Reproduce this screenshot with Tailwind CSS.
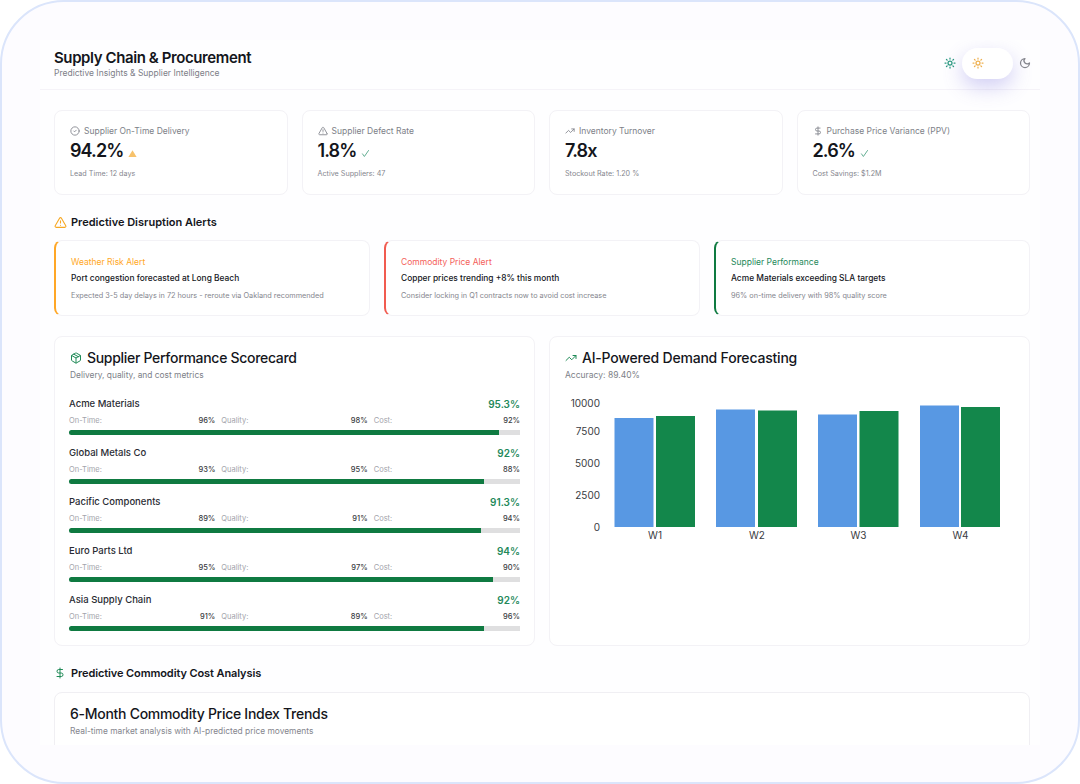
<!DOCTYPE html>
<html lang="en">
<head>
    <meta charset="UTF-8">
    <title>Supply Chain &amp; Procurement</title>
    <script src="https://cdn.jsdelivr.net/npm/@tailwindcss/browser@4"></script>
</head>
<body class="bg-white font-['Inter',sans-serif] text-[#14161c] w-[1080px] h-[784px] overflow-hidden">
    <div class="h-[784px] rounded-[64px] border-2 border-[#dbe5fb] bg-[#fdfcff] pt-[38px] px-[38px]">
        <main class="h-[705px] w-[1000px] overflow-hidden bg-[#fefeff]">
            <!-- Header -->
            <header class="h-[50px] border-b border-[#f5f3f8] pl-[14px] pr-[9px] flex items-center justify-between">
                <div class="pb-[2px]">
                    <h1 class="text-[15px] leading-[18px] font-semibold tracking-[-0.4px]">Supply Chain &amp; Procurement</h1>
                    <p class="text-[8.5px] leading-[12px] text-[#7d7f88]">Predictive Insights &amp; Supplier Intelligence</p>
                </div>
                <div class="flex items-center gap-[6px] mt-[-3px]">
                    <svg class="w-[12px] h-[12px] text-[#2a9a80]" viewBox="0 0 24 24" fill="none" stroke="currentColor" stroke-width="2.5" stroke-linecap="round"><circle cx="12" cy="12" r="4"/><path d="M12 2v2"/><path d="M12 20v2"/><path d="m4.93 4.93 1.41 1.41"/><path d="m17.66 17.66 1.41 1.41"/><path d="M2 12h2"/><path d="M20 12h2"/><path d="m6.34 17.66-1.41 1.41"/><path d="m19.07 4.93-1.41 1.41"/></svg>
                    <div class="w-[51px] h-[31px] rounded-full bg-white shadow-[0_8px_20px_rgba(110,100,220,0.3)] flex items-center pl-[10px]">
                        <svg class="w-[12px] h-[12px] text-[#eeb04f]" viewBox="0 0 24 24" fill="none" stroke="currentColor" stroke-width="2.5" stroke-linecap="round"><circle cx="12" cy="12" r="4"/><path d="M12 2v2"/><path d="M12 20v2"/><path d="m4.93 4.93 1.41 1.41"/><path d="m17.66 17.66 1.41 1.41"/><path d="M2 12h2"/><path d="M20 12h2"/><path d="m6.34 17.66-1.41 1.41"/><path d="m19.07 4.93-1.41 1.41"/></svg>
                    </div>
                    <svg class="w-[12px] h-[12px] text-[#85868e]" viewBox="0 0 24 24" fill="none" stroke="currentColor" stroke-width="2.5" stroke-linecap="round" stroke-linejoin="round"><path d="M12 3a6 6 0 0 0 9 9 9 9 0 1 1-9-9Z"/></svg>
                </div>
            </header>

            <div class="pl-[14px] pr-[10px] pt-[20px]">
                <!-- KPI cards -->
                <section class="grid grid-cols-4 gap-[14px]">
                    <div class="h-[85px] rounded-[8px] bg-white border border-[#f3f2f6] px-[15px] pt-[14px]">
                        <div class="flex items-center gap-[4px] text-[8.5px] leading-[12px] text-[#7d7f88]">
                            <svg class="w-[10px] h-[10px]" viewBox="0 0 24 24" fill="none" stroke="currentColor" stroke-width="2" stroke-linecap="round" stroke-linejoin="round"><circle cx="12" cy="12" r="10"/><path d="m9 12 2 2 4-4"/></svg>
                            Supplier On-Time Delivery
                        </div>
                        <div class="flex items-center gap-[5px] mt-[1px]">
                            <span class="text-[18px] leading-[26px] font-semibold tracking-[-0.9px]">94.2%</span>
                            <svg class="w-[9px] h-[9px] mt-[4px] text-[#f7c26b]" viewBox="0 0 24 24" fill="currentColor"><path d="M12 3 23 21H1Z"/></svg>
                        </div>
                        <p class="mt-[5px] text-[7.2px] leading-[10px] text-[#85868e]">Lead Time: 12 days</p>
                    </div>
                    <div class="h-[85px] rounded-[8px] bg-white border border-[#f3f2f6] px-[15px] pt-[14px]">
                        <div class="flex items-center gap-[4px] text-[8.5px] leading-[12px] text-[#7d7f88]">
                            <svg class="w-[10px] h-[10px]" viewBox="0 0 24 24" fill="none" stroke="currentColor" stroke-width="2" stroke-linecap="round" stroke-linejoin="round"><path d="m21.73 18-8-14a2 2 0 0 0-3.48 0l-8 14A2 2 0 0 0 4 21h16a2 2 0 0 0 1.73-3"/><path d="M12 9v4"/><path d="M12 17h.01"/></svg>
                            Supplier Defect Rate
                        </div>
                        <div class="flex items-center gap-[5px] mt-[1px]">
                            <span class="text-[18px] leading-[26px] font-semibold tracking-[-0.9px]">1.8%</span>
                            <svg class="w-[9px] h-[9px] mt-[4px] text-[#5aa98c]" viewBox="0 0 24 24" fill="none" stroke="currentColor" stroke-width="2.5" stroke-linecap="round"><path d="m4 13 5 7L20 4"/></svg>
                        </div>
                        <p class="mt-[5px] text-[7.2px] leading-[10px] text-[#85868e]">Active Suppliers: 47</p>
                    </div>
                    <div class="h-[85px] rounded-[8px] bg-white border border-[#f3f2f6] px-[15px] pt-[14px]">
                        <div class="flex items-center gap-[4px] text-[8.5px] leading-[12px] text-[#7d7f88]">
                            <svg class="w-[10px] h-[10px]" viewBox="0 0 24 24" fill="none" stroke="currentColor" stroke-width="2" stroke-linecap="round" stroke-linejoin="round"><polyline points="22 7 13.5 15.5 8.5 10.5 2 17"/><polyline points="16 7 22 7 22 13"/></svg>
                            Inventory Turnover
                        </div>
                        <div class="flex items-center gap-[5px] mt-[1px]">
                            <span class="text-[18px] leading-[26px] font-semibold tracking-[-0.9px]">7.8x</span>
                        </div>
                        <p class="mt-[5px] text-[7.2px] leading-[10px] text-[#85868e]">Stockout Rate: 1.20 %</p>
                    </div>
                    <div class="h-[85px] rounded-[8px] bg-white border border-[#f3f2f6] px-[15px] pt-[14px]">
                        <div class="flex items-center gap-[4px] text-[8.5px] leading-[12px] text-[#7d7f88]">
                            <svg class="w-[10px] h-[10px]" viewBox="0 0 24 24" fill="none" stroke="currentColor" stroke-width="2" stroke-linecap="round" stroke-linejoin="round"><line x1="12" x2="12" y1="2" y2="22"/><path d="M17 5H9.5a3.5 3.5 0 0 0 0 7h5a3.5 3.5 0 0 1 0 7H6"/></svg>
                            Purchase Price Variance (PPV)
                        </div>
                        <div class="flex items-center gap-[5px] mt-[1px]">
                            <span class="text-[18px] leading-[26px] font-semibold tracking-[-0.9px]">2.6%</span>
                            <svg class="w-[9px] h-[9px] mt-[4px] text-[#5aa98c]" viewBox="0 0 24 24" fill="none" stroke="currentColor" stroke-width="2.5" stroke-linecap="round"><path d="m4 13 5 7L20 4"/></svg>
                        </div>
                        <p class="mt-[5px] text-[7.2px] leading-[10px] text-[#85868e]">Cost Savings: $1.2M</p>
                    </div>
                </section>

                <!-- Alerts -->
                <h2 class="mt-[20px] h-[14px] flex items-center gap-[4px] text-[11px] font-semibold">
                    <svg class="w-[13px] h-[13px] text-[#f7a823]" viewBox="0 0 24 24" fill="none" stroke="currentColor" stroke-width="2" stroke-linecap="round" stroke-linejoin="round"><path d="m21.73 18-8-14a2 2 0 0 0-3.48 0l-8 14A2 2 0 0 0 4 21h16a2 2 0 0 0 1.73-3"/><path d="M12 9v4"/><path d="M12 17h.01"/></svg>
                    Predictive Disruption Alerts
                </h2>
                <section class="grid grid-cols-3 gap-[14px] mt-[11px]">
                    <div class="h-[76px] rounded-[8px] bg-white border border-[#f3f2f6] border-l-2 border-l-[#ffa726] pl-[15px] pt-[15px]">
                        <p class="text-[8.5px] leading-[12px] text-[#ffa726]">Weather Risk Alert</p>
                        <p class="mt-[4px] text-[8.4px] leading-[12px] font-medium">Port congestion forecasted at Long Beach</p>
                        <p class="mt-[6px] text-[7.3px] leading-[12px] text-[#85868e]">Expected 3-5 day delays in 72 hours - reroute via Oakland recommended</p>
                    </div>
                    <div class="h-[76px] rounded-[8px] bg-white border border-[#f3f2f6] border-l-2 border-l-[#f15b50] pl-[15px] pt-[15px]">
                        <p class="text-[8.5px] leading-[12px] text-[#f4615a]">Commodity Price Alert</p>
                        <p class="mt-[4px] text-[8.4px] leading-[12px] font-medium">Copper prices trending +8% this month</p>
                        <p class="mt-[6px] text-[7.3px] leading-[12px] text-[#85868e]">Consider locking in Q1 contracts now to avoid cost increase</p>
                    </div>
                    <div class="h-[76px] rounded-[8px] bg-white border border-[#f3f2f6] border-l-2 border-l-[#0f7a41] pl-[15px] pt-[15px]">
                        <p class="text-[8.5px] leading-[12px] text-[#23895a]">Supplier Performance</p>
                        <p class="mt-[4px] text-[8.4px] leading-[12px] font-medium">Acme Materials exceeding SLA targets</p>
                        <p class="mt-[6px] text-[7.3px] leading-[12px] text-[#85868e]">96% on-time delivery with 98% quality score</p>
                    </div>
                </section>

                <!-- Scorecard + forecast -->
                <section class="grid grid-cols-2 gap-[14px] mt-[20px]">
                    <div class="h-[310px] rounded-[8px] bg-white border border-[#f3f2f6] px-[15px] pt-[12px]">
                        <h3 class="flex items-center gap-[5px] text-[14px] leading-[18px] font-medium tracking-[-0.3px]">
                            <svg class="w-[12px] h-[12px] text-[#1f8a57]" viewBox="0 0 24 24" fill="none" stroke="currentColor" stroke-width="2" stroke-linecap="round" stroke-linejoin="round"><path d="M11 21.73a2 2 0 0 0 2 0l7-4A2 2 0 0 0 21 16V8a2 2 0 0 0-1-1.73l-7-4a2 2 0 0 0-2 0l-7 4A2 2 0 0 0 3 8v8a2 2 0 0 0 1 1.73z"/><path d="M12 22V12"/><polyline points="3.29 7 12 12 20.71 7"/><path d="m7.5 4.27 9 5.15"/></svg>
                            Supplier Performance Scorecard
                        </h3>
                        <p class="mt-[2px] text-[8.4px] leading-[12px] text-[#7d7f88]">Delivery, quality, and cost metrics</p>

                        <div class="mt-[17px] mx-[-1px] flex flex-col gap-[9px]">
                            <div class="h-[40px]">
                                <div class="flex justify-between items-center text-[9.5px] leading-[12px]"><span class="font-medium text-[#2a2c33]">Acme Materials</span><span class="text-[10px] leading-[10px] font-semibold text-[#23895a]">95.3%</span></div>
                                <div class="grid grid-cols-3 gap-[6px] mt-[5.5px] text-[7.5px] leading-[10px]">
                                    <div class="flex justify-between"><span class="text-[#a3a4ab]">On-Time:</span><span class="font-medium text-[#3a3c42]">96%</span></div>
                                    <div class="flex justify-between"><span class="text-[#a3a4ab]">Quality:</span><span class="font-medium text-[#3a3c42]">98%</span></div>
                                    <div class="flex justify-between"><span class="text-[#a3a4ab]">Cost:</span><span class="font-medium text-[#3a3c42]">92%</span></div>
                                </div>
                                <div class="mt-[4px] h-[5px] rounded-l-full bg-[#dfdfe0]"><div class="h-full rounded-l-full bg-[#0f7a41]" style="width: 95.3%"></div></div>
                            </div>
                            <div class="h-[40px]">
                                <div class="flex justify-between items-center text-[9.5px] leading-[12px]"><span class="font-medium text-[#2a2c33]">Global Metals Co</span><span class="text-[10px] leading-[10px] font-semibold text-[#23895a]">92%</span></div>
                                <div class="grid grid-cols-3 gap-[6px] mt-[5.5px] text-[7.5px] leading-[10px]">
                                    <div class="flex justify-between"><span class="text-[#a3a4ab]">On-Time:</span><span class="font-medium text-[#3a3c42]">93%</span></div>
                                    <div class="flex justify-between"><span class="text-[#a3a4ab]">Quality:</span><span class="font-medium text-[#3a3c42]">95%</span></div>
                                    <div class="flex justify-between"><span class="text-[#a3a4ab]">Cost:</span><span class="font-medium text-[#3a3c42]">88%</span></div>
                                </div>
                                <div class="mt-[4px] h-[5px] rounded-l-full bg-[#dfdfe0]"><div class="h-full rounded-l-full bg-[#0f7a41]" style="width: 92%"></div></div>
                            </div>
                            <div class="h-[40px]">
                                <div class="flex justify-between items-center text-[9.5px] leading-[12px]"><span class="font-medium text-[#2a2c33]">Pacific Components</span><span class="text-[10px] leading-[10px] font-semibold text-[#23895a]">91.3%</span></div>
                                <div class="grid grid-cols-3 gap-[6px] mt-[5.5px] text-[7.5px] leading-[10px]">
                                    <div class="flex justify-between"><span class="text-[#a3a4ab]">On-Time:</span><span class="font-medium text-[#3a3c42]">89%</span></div>
                                    <div class="flex justify-between"><span class="text-[#a3a4ab]">Quality:</span><span class="font-medium text-[#3a3c42]">91%</span></div>
                                    <div class="flex justify-between"><span class="text-[#a3a4ab]">Cost:</span><span class="font-medium text-[#3a3c42]">94%</span></div>
                                </div>
                                <div class="mt-[4px] h-[5px] rounded-l-full bg-[#dfdfe0]"><div class="h-full rounded-l-full bg-[#0f7a41]" style="width: 91.3%"></div></div>
                            </div>
                            <div class="h-[40px]">
                                <div class="flex justify-between items-center text-[9.5px] leading-[12px]"><span class="font-medium text-[#2a2c33]">Euro Parts Ltd</span><span class="text-[10px] leading-[10px] font-semibold text-[#23895a]">94%</span></div>
                                <div class="grid grid-cols-3 gap-[6px] mt-[5.5px] text-[7.5px] leading-[10px]">
                                    <div class="flex justify-between"><span class="text-[#a3a4ab]">On-Time:</span><span class="font-medium text-[#3a3c42]">95%</span></div>
                                    <div class="flex justify-between"><span class="text-[#a3a4ab]">Quality:</span><span class="font-medium text-[#3a3c42]">97%</span></div>
                                    <div class="flex justify-between"><span class="text-[#a3a4ab]">Cost:</span><span class="font-medium text-[#3a3c42]">90%</span></div>
                                </div>
                                <div class="mt-[4px] h-[5px] rounded-l-full bg-[#dfdfe0]"><div class="h-full rounded-l-full bg-[#0f7a41]" style="width: 94%"></div></div>
                            </div>
                            <div class="h-[40px]">
                                <div class="flex justify-between items-center text-[9.5px] leading-[12px]"><span class="font-medium text-[#2a2c33]">Asia Supply Chain</span><span class="text-[10px] leading-[10px] font-semibold text-[#23895a]">92%</span></div>
                                <div class="grid grid-cols-3 gap-[6px] mt-[5.5px] text-[7.5px] leading-[10px]">
                                    <div class="flex justify-between"><span class="text-[#a3a4ab]">On-Time:</span><span class="font-medium text-[#3a3c42]">91%</span></div>
                                    <div class="flex justify-between"><span class="text-[#a3a4ab]">Quality:</span><span class="font-medium text-[#3a3c42]">89%</span></div>
                                    <div class="flex justify-between"><span class="text-[#a3a4ab]">Cost:</span><span class="font-medium text-[#3a3c42]">96%</span></div>
                                </div>
                                <div class="mt-[4px] h-[5px] rounded-l-full bg-[#dfdfe0]"><div class="h-full rounded-l-full bg-[#0f7a41]" style="width: 92%"></div></div>
                            </div>
                        </div>
                    </div>

                    <div class="h-[310px] rounded-[8px] bg-white border border-[#f3f2f6] px-[15px] pt-[12px]">
                        <h3 class="flex items-center gap-[5px] text-[14px] leading-[18px] font-medium tracking-[-0.2px]">
                            <svg class="w-[12px] h-[12px] text-[#1f8a57]" viewBox="0 0 24 24" fill="none" stroke="currentColor" stroke-width="2" stroke-linecap="round" stroke-linejoin="round"><polyline points="22 7 13.5 15.5 8.5 10.5 2 17"/><polyline points="16 7 22 7 22 13"/></svg>
                            AI-Powered Demand Forecasting
                        </h3>
                        <p class="mt-[2px] text-[8.5px] leading-[12px] text-[#7d7f88]">Accuracy: 89.40%</p>
                        <!-- viewBox origin is the page position of the chart's top-left -->
                        <svg class="block mt-[15px]" width="449" height="150" viewBox="565 396 449 150" font-family="Inter" font-size="10" fill="#3a3c42">
                            <g text-anchor="end">
                                <text x="600" y="407">10000</text>
                                <text x="600" y="435">7500</text>
                                <text x="600" y="467">5000</text>
                                <text x="600" y="499">2500</text>
                                <text x="600" y="531">0</text>
                            </g>
                            <g fill="#5898e3">
                                <rect x="614.5" y="418" width="39" height="109"/>
                                <rect x="716" y="409.5" width="39" height="117.5"/>
                                <rect x="818" y="414.5" width="39" height="112.5"/>
                                <rect x="920" y="405.5" width="39" height="121.5"/>
                            </g>
                            <g fill="#13874b">
                                <rect x="656" y="416" width="39" height="111"/>
                                <rect x="758" y="410.5" width="39" height="116.5"/>
                                <rect x="859.5" y="411" width="39" height="116"/>
                                <rect x="961" y="407" width="39" height="120"/>
                            </g>
                            <g text-anchor="middle">
                                <text x="655" y="539">W1</text>
                                <text x="757" y="539">W2</text>
                                <text x="858.5" y="539">W3</text>
                                <text x="960.5" y="539">W4</text>
                            </g>
                        </svg>
                    </div>
                </section>

                <!-- Commodity -->
                <h2 class="mt-[20px] h-[14px] flex items-center gap-[5px] text-[11px] font-semibold tracking-[-0.1px]">
                    <svg class="w-[12px] h-[12px] text-[#1f8a57]" viewBox="0 0 24 24" fill="none" stroke="currentColor" stroke-width="2" stroke-linecap="round" stroke-linejoin="round"><line x1="12" x2="12" y1="2" y2="22"/><path d="M17 5H9.5a3.5 3.5 0 0 0 0 7h5a3.5 3.5 0 0 1 0 7H6"/></svg>
                    Predictive Commodity Cost Analysis
                </h2>
                <section class="mt-[12px] h-[100px] rounded-[8px] bg-white border border-[#f0eff3] px-[15px] pt-[12px]">
                    <h3 class="text-[14px] leading-[18px] font-medium tracking-[-0.28px]">6-Month Commodity Price Index Trends</h3>
                    <p class="mt-[2px] text-[8.4px] leading-[12px] text-[#85868e]">Real-time market analysis with AI-predicted price movements</p>
                </section>
            </div>
        </main>
    </div>
</body>
</html>
